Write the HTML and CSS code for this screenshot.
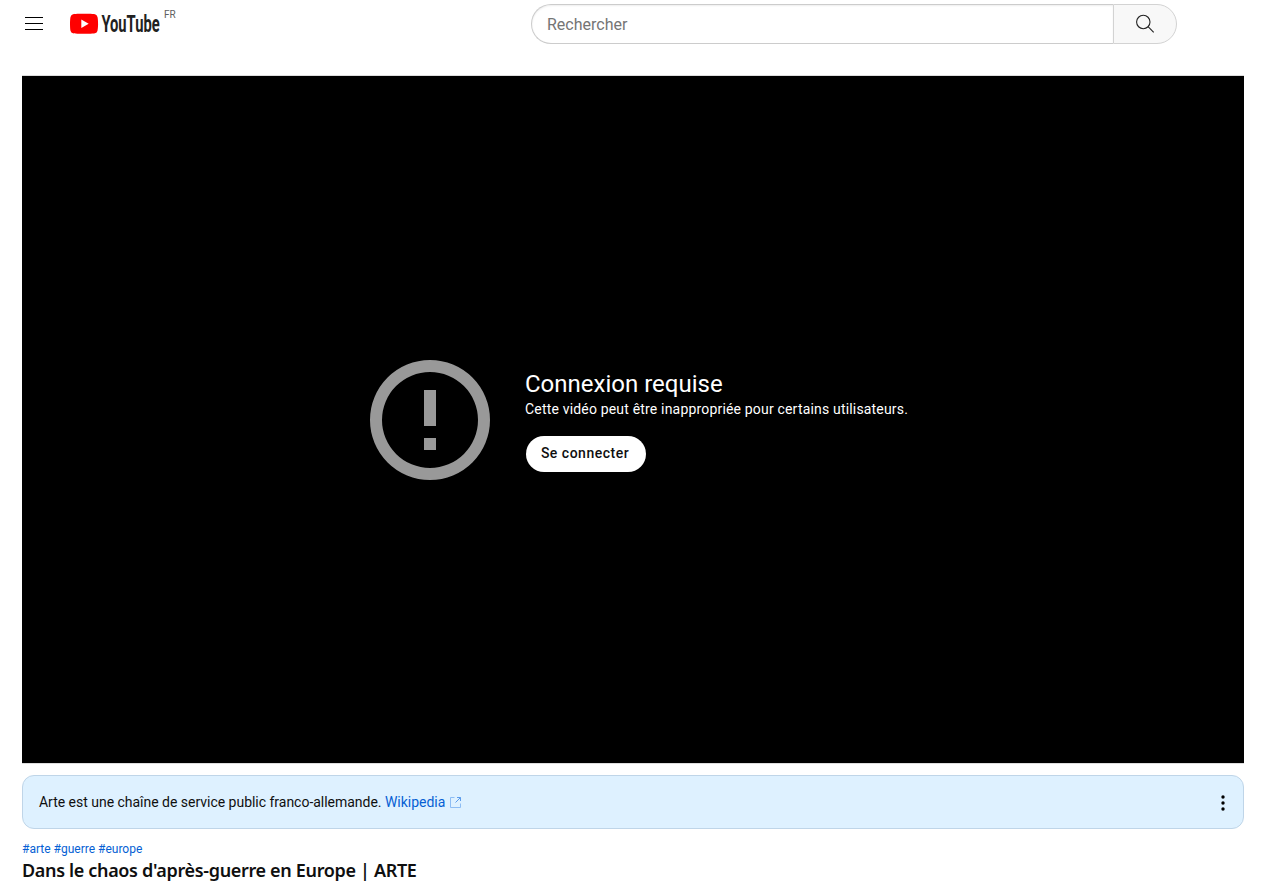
FILE: index.html
```html
<!DOCTYPE html>
<html lang="fr">
<head>
<meta charset="utf-8">
<title>Dans le chaos d'après-guerre en Europe | ARTE - YouTube</title>
<link rel="stylesheet" href="styles.css">
</head>
<body>
<header class="masthead">
  <button class="menu-button" aria-label="Guide"><svg width="18" height="13" viewBox="0 0 18 13"><path d="M0 0h18v1H0zM0 6h18v1H0zM0 12h18v1H0z"/></svg></button>
  <a class="logo" aria-label="YouTube">
    <svg class="logo-art" width="91" height="22" viewBox="0 0 91 22">
      <path fill="#f00" d="M27.500 3.900a3.600 3.600 0 0 0-2.500-2.600C22.800.8 14 .8 14 .8S5.200.8 3 1.300A3.600 3.600 0 0 0 .5 3.900C0 6.100 0 10.800 0 10.800s0 4.700.5 6.900A3.600 3.600 0 0 0 3 20.300c2.200.5 11 .5 11 .5s8.800 0 11-.5a3.600 3.600 0 0 0 2.500-2.600c.6-2.200.6-6.900.6-6.900s0-4.700-.6-6.900z"/>
      <path fill="#fff" d="M11.300 6.600v8.400l7.400-4.200z"/>
      <text class="wordmark" transform="translate(31.400 19.300) scale(.64 1)" textLength="91" lengthAdjust="spacingAndGlyphs">YouTube</text>
    </svg>
    <span class="country">FR</span>
  </a>
  <form class="search">
    <input class="search-input" type="text" placeholder="Rechercher">
    <button class="search-button" type="button" aria-label="Rechercher"><svg width="20" height="20" viewBox="0 0 20 20" fill="none" stroke="#222" stroke-width="1.100"><circle cx="8.300" cy="8" r="6.700"/><path d="M13.100 12.700l5.600 5.600"/></svg></button>
  </form>
</header>
<main class="watch">
  <section class="player">
    <div class="notice">
      <svg width="120" height="120" viewBox="0 0 120 120" fill="#999"><path fill-rule="evenodd" d="M60 0a60 60 0 1 0 0 120A60 60 0 0 0 60 0zm0 12a48 48 0 1 1 0 96 48 48 0 0 1 0-96z"/><path d="M54 30h12v36H54zM54 78h12v12H54z"/></svg>
      <div class="notice-body">
        <div class="notice-title">Connexion requise</div>
        <div class="notice-text">Cette vidéo peut être inappropriée pour certains utilisateurs.</div>
        <button class="sign-in">Se connecter</button>
      </div>
    </div>
  </section>
  <aside class="info-panel">
    <p class="info-text">Arte est une chaîne de service public franco-allemande. <a class="link">Wikipedia</a></p>
    <svg class="external" width="13" height="13" viewBox="0 0 13 13" fill="none" stroke="#8dbdf4"><path d="M5.500 1.500h-4v10h10V7.500"/><path stroke="#5c9cec" d="M8 1.500h3.500V5M11.500 1.500l-5 5"/></svg>
    <svg class="more" width="4" height="16" viewBox="0 0 4 16"><circle cx="2" cy="2" r="1.700"/><circle cx="2" cy="8" r="1.700"/><circle cx="2" cy="14" r="1.700"/></svg>
  </aside>
  <div class="tags link">#arte #guerre #europe</div>
  <h1 class="title">Dans le chaos d'après-guerre en Europe | ARTE</h1>
</main>
</body>
</html>
```
FILE: styles.css
```css
* { box-sizing: border-box; }
body { margin: 0; height: 887px; overflow: hidden; background: #fff; color: #0f0f0f; font-family: Roboto, Arial, sans-serif; }
button { padding: 0; border: 0; font-family: inherit; }
svg { display: block; flex: none; }
.masthead { display: flex; height: 75px; align-items: flex-start; padding: 4px 0 0 25px; }
.menu-button { width: 18px; height: 13px; margin: 13px 27px 0 0; background: none; }
.logo { display: flex; width: 461px; padding-top: 9px; }
.logo-art { overflow: visible; }
.wordmark { font: 700 24px Roboto, sans-serif; fill: #212121; }
.country { margin: -3px 0 0 3px; font-size: 10px; line-height: 10px; color: #606060; }
.search { display: flex; width: 646px; height: 40px; }
.search-input { width: 582px; padding: 0 0 0 15px; border: 1px solid #ccc; border-right: 0; border-radius: 40px 0 0 40px; box-shadow: inset 0 1px 2px #eee; background: #fff; font: 16px Roboto, sans-serif; outline: 0; }
.search-input::placeholder { color: #757575; opacity: 1; }
.search-button { display: flex; width: 64px; align-items: center; justify-content: center; border: 1px solid #d3d3d3; border-radius: 0 40px 40px 0; background: #f8f8f8; }
.watch { width: 1222px; margin-left: 22px; }
.player { height: 689px; padding: 284px 0 0 348px; border: solid #ddd; border-width: 1px 0; background: #000; color: #fff; }
.notice { display: flex; gap: 35px; }
.notice-body { padding-top: 9px; }
.notice-title { font-size: 24px; line-height: 30px; }
.notice-text { font-size: 14px; line-height: 20px; letter-spacing: .18px; }
.sign-in { width: 120px; height: 36px; margin: 17px 0 0 1px; padding: 0 2px 2px 0; border-radius: 18px; background: #fff; color: #0f0f0f; font-size: 14px; font-weight: 500; letter-spacing: .5px; }
.info-panel { display: flex; height: 54px; align-items: center; margin-top: 11px; padding: 0 18px 0 16px; border: 1px solid #bfd5e8; border-radius: 12px; background: #def1ff; }
.info-text { margin: 0; font-size: 14px; line-height: 20px; letter-spacing: -.02px; }
.link { color: #065fd4; }
.external { margin-left: 4px; }
.more { margin: 1px 0 0 auto; }
.tags { margin-top: 11px; font-size: 12px; line-height: 18px; }
.title { margin: -1px 0 0; font: 600 18px/26px "Noto Sans", sans-serif; letter-spacing: -.34px; }
```
